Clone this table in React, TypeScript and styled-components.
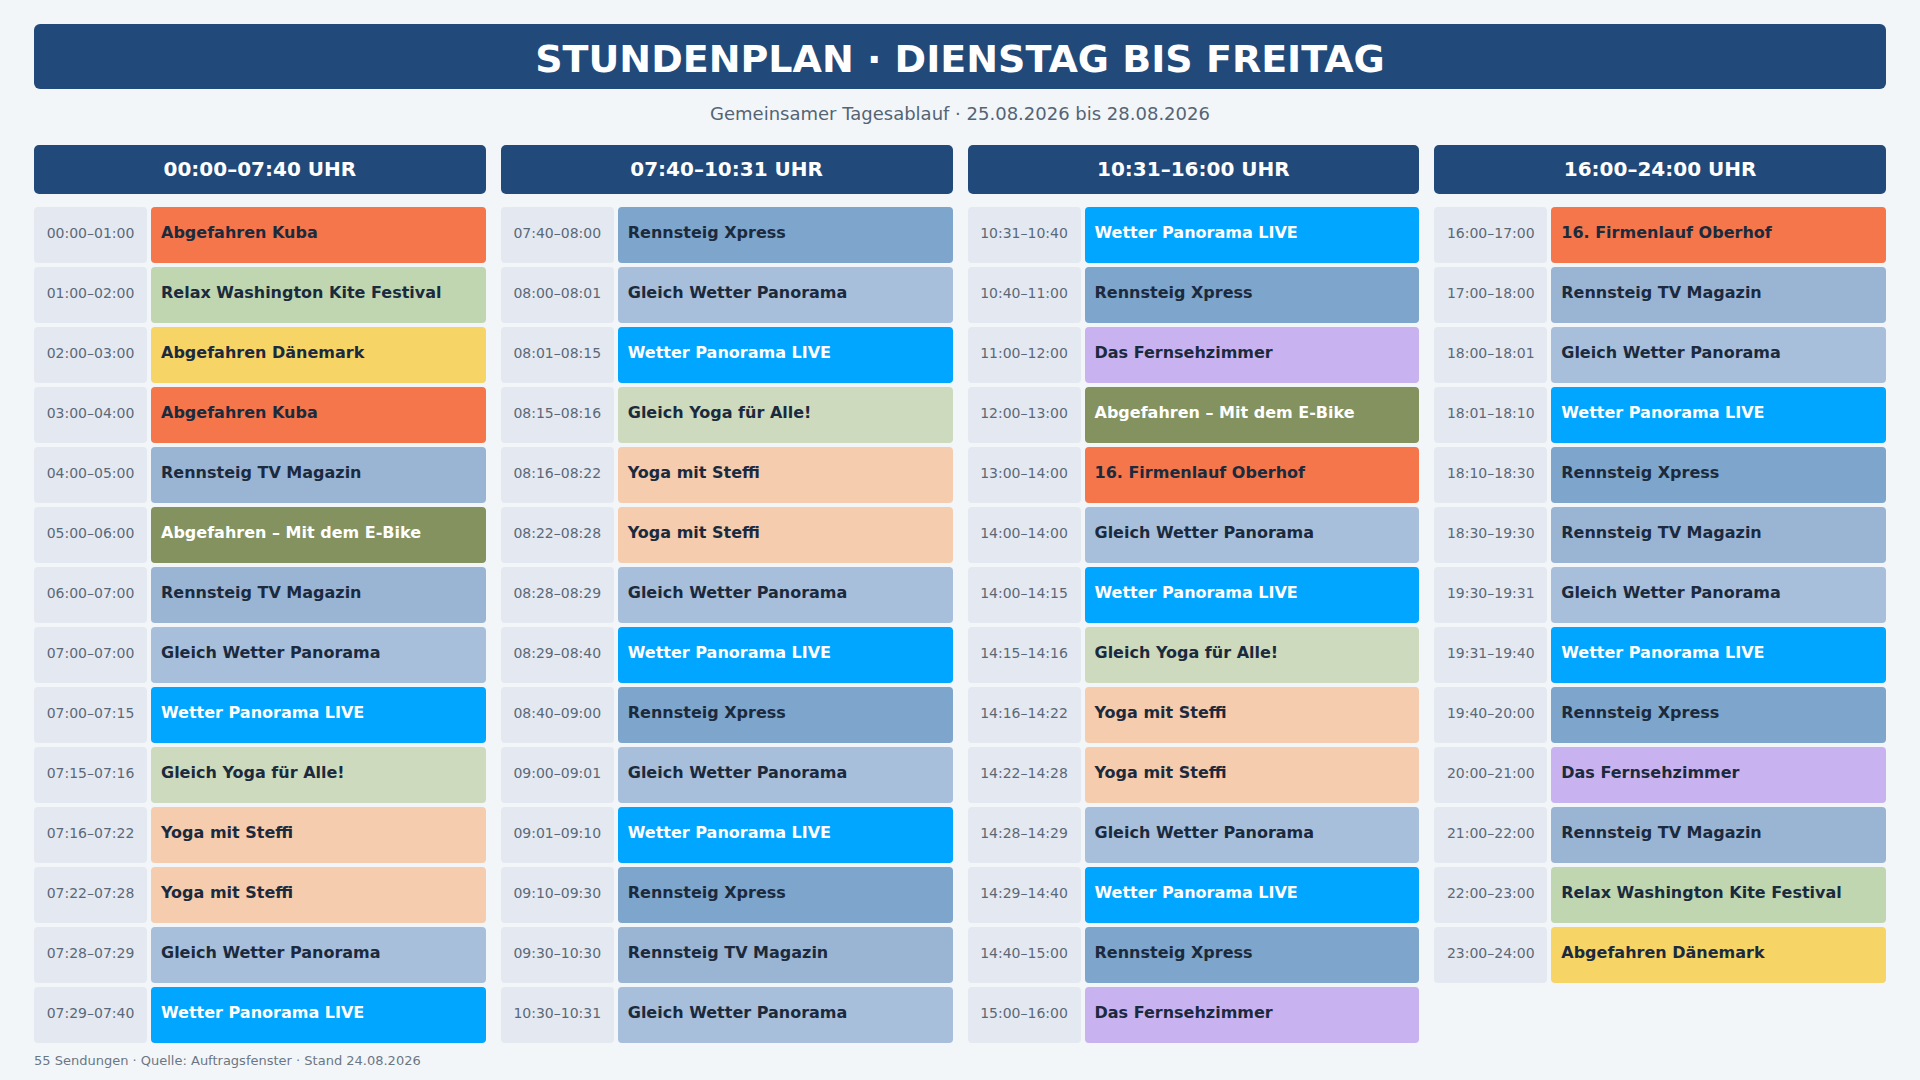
import React from "react";
import styled, { createGlobalStyle } from "styled-components";

const GlobalStyle = createGlobalStyle`
  html, body { margin: 0; padding: 0; background: #f3f6f9; }
  body { font-family: "DejaVu Sans", "Noto Sans", sans-serif; }
  * { box-sizing: border-box; }
`;

type Theme = { bg: string; fg: string };

const THEMES: Record<string, Theme> = {
  "Abgefahren Kuba": { bg: "#f4764a", fg: "#1b2a3d" },
  "16. Firmenlauf Oberhof": { bg: "#f4764a", fg: "#1b2a3d" },
  "Relax Washington Kite Festival": { bg: "#c0d6b0", fg: "#1b2a3d" },
  "Abgefahren Dänemark": { bg: "#f6d566", fg: "#1b2a3d" },
  "Rennsteig TV Magazin": { bg: "#9ab5d3", fg: "#1b2a3d" },
  "Abgefahren – Mit dem E-Bike": { bg: "#83925f", fg: "#ffffff" },
  "Gleich Wetter Panorama": { bg: "#a7bfdb", fg: "#1b2a3d" },
  "Wetter Panorama LIVE": { bg: "#00a6ff", fg: "#ffffff" },
  "Gleich Yoga für Alle!": { bg: "#cddabd", fg: "#1b2a3d" },
  "Yoga mit Steffi": { bg: "#f5ccad", fg: "#1b2a3d" },
  "Rennsteig Xpress": { bg: "#7ea5cb", fg: "#1b2a3d" },
  "Das Fernsehzimmer": { bg: "#c8b3f0", fg: "#1b2a3d" },
};

type Slot = [string, string];
type Column = { title: string; slots: Slot[] };

const COLUMNS: Column[] = [
  {
    title: "00:00–07:40 UHR",
    slots: [
      ["00:00–01:00", "Abgefahren Kuba"],
      ["01:00–02:00", "Relax Washington Kite Festival"],
      ["02:00–03:00", "Abgefahren Dänemark"],
      ["03:00–04:00", "Abgefahren Kuba"],
      ["04:00–05:00", "Rennsteig TV Magazin"],
      ["05:00–06:00", "Abgefahren – Mit dem E-Bike"],
      ["06:00–07:00", "Rennsteig TV Magazin"],
      ["07:00–07:00", "Gleich Wetter Panorama"],
      ["07:00–07:15", "Wetter Panorama LIVE"],
      ["07:15–07:16", "Gleich Yoga für Alle!"],
      ["07:16–07:22", "Yoga mit Steffi"],
      ["07:22–07:28", "Yoga mit Steffi"],
      ["07:28–07:29", "Gleich Wetter Panorama"],
      ["07:29–07:40", "Wetter Panorama LIVE"],
    ],
  },
  {
    title: "07:40–10:31 UHR",
    slots: [
      ["07:40–08:00", "Rennsteig Xpress"],
      ["08:00–08:01", "Gleich Wetter Panorama"],
      ["08:01–08:15", "Wetter Panorama LIVE"],
      ["08:15–08:16", "Gleich Yoga für Alle!"],
      ["08:16–08:22", "Yoga mit Steffi"],
      ["08:22–08:28", "Yoga mit Steffi"],
      ["08:28–08:29", "Gleich Wetter Panorama"],
      ["08:29–08:40", "Wetter Panorama LIVE"],
      ["08:40–09:00", "Rennsteig Xpress"],
      ["09:00–09:01", "Gleich Wetter Panorama"],
      ["09:01–09:10", "Wetter Panorama LIVE"],
      ["09:10–09:30", "Rennsteig Xpress"],
      ["09:30–10:30", "Rennsteig TV Magazin"],
      ["10:30–10:31", "Gleich Wetter Panorama"],
    ],
  },
  {
    title: "10:31–16:00 UHR",
    slots: [
      ["10:31–10:40", "Wetter Panorama LIVE"],
      ["10:40–11:00", "Rennsteig Xpress"],
      ["11:00–12:00", "Das Fernsehzimmer"],
      ["12:00–13:00", "Abgefahren – Mit dem E-Bike"],
      ["13:00–14:00", "16. Firmenlauf Oberhof"],
      ["14:00–14:00", "Gleich Wetter Panorama"],
      ["14:00–14:15", "Wetter Panorama LIVE"],
      ["14:15–14:16", "Gleich Yoga für Alle!"],
      ["14:16–14:22", "Yoga mit Steffi"],
      ["14:22–14:28", "Yoga mit Steffi"],
      ["14:28–14:29", "Gleich Wetter Panorama"],
      ["14:29–14:40", "Wetter Panorama LIVE"],
      ["14:40–15:00", "Rennsteig Xpress"],
      ["15:00–16:00", "Das Fernsehzimmer"],
    ],
  },
  {
    title: "16:00–24:00 UHR",
    slots: [
      ["16:00–17:00", "16. Firmenlauf Oberhof"],
      ["17:00–18:00", "Rennsteig TV Magazin"],
      ["18:00–18:01", "Gleich Wetter Panorama"],
      ["18:01–18:10", "Wetter Panorama LIVE"],
      ["18:10–18:30", "Rennsteig Xpress"],
      ["18:30–19:30", "Rennsteig TV Magazin"],
      ["19:30–19:31", "Gleich Wetter Panorama"],
      ["19:31–19:40", "Wetter Panorama LIVE"],
      ["19:40–20:00", "Rennsteig Xpress"],
      ["20:00–21:00", "Das Fernsehzimmer"],
      ["21:00–22:00", "Rennsteig TV Magazin"],
      ["22:00–23:00", "Relax Washington Kite Festival"],
      ["23:00–24:00", "Abgefahren Dänemark"],
    ],
  },
];

const Page = styled.div`
  width: 1920px;
  height: 1080px;
  padding: 24px 34px 0;
  display: flex;
  flex-direction: column;
`;

const TitleBar = styled.header`
  height: 65px;
  background: #214a7a;
  border-radius: 6px;
  display: flex;
  align-items: center;
  justify-content: center;
  padding-top: 4px;
`;

const Title = styled.h1`
  margin: 0;
  color: #ffffff;
  font-size: 38px;
  font-weight: 700;
  line-height: 1;
  letter-spacing: 0;
`;

const Subtitle = styled.p`
  margin: 14px 0 0;
  height: 42px;
  text-align: center;
  color: #556474;
  font-size: 18px;
  line-height: 21px;
`;

const Grid = styled.div`
  display: grid;
  grid-template-columns: repeat(4, 1fr);
  column-gap: 15px;
  align-items: start;
`;

const Col = styled.section`
  display: flex;
  flex-direction: column;
  gap: 4px;
`;

const ColHead = styled.h2`
  margin: 0 0 9px;
  height: 49px;
  background: #214a7a;
  border-radius: 5px;
  color: #ffffff;
  font-size: 20px;
  font-weight: 700;
  display: flex;
  align-items: center;
  justify-content: center;
  padding-bottom: 1px;
`;

const Row = styled.div`
  display: grid;
  grid-template-columns: 113px 1fr;
  column-gap: 4px;
  height: 56px;
`;

const TimeCell = styled.div`
  background: #e4e9f1;
  border-radius: 4px;
  color: #5b6878;
  font-size: 14px;
  display: flex;
  align-items: center;
  justify-content: center;
  padding-bottom: 4px;
  white-space: nowrap;
`;

const ShowCell = styled.div<{ $bg: string; $fg: string }>`
  background: ${(p) => p.$bg};
  color: ${(p) => p.$fg};
  border-radius: 4px;
  font-size: 16px;
  font-weight: 700;
  display: flex;
  align-items: center;
  padding: 0 10px 5px;
  white-space: nowrap;
  overflow: hidden;
`;

const Footer = styled.footer`
  margin-top: 10px;
  color: #6b7684;
  font-size: 13px;
  line-height: 15px;
`;

export default function App() {
  return (
    <>
      <GlobalStyle />
      <Page>
        <TitleBar>
          <Title>STUNDENPLAN · DIENSTAG BIS FREITAG</Title>
        </TitleBar>
        <Subtitle>Gemeinsamer Tagesablauf · 25.08.2026 bis 28.08.2026</Subtitle>
        <Grid>
          {COLUMNS.map((c) => (
            <Col key={c.title}>
              <ColHead>{c.title}</ColHead>
              {c.slots.map(([time, name], i) => {
                const t = THEMES[name];
                return (
                  <Row key={i}>
                    <TimeCell>{time}</TimeCell>
                    <ShowCell $bg={t.bg} $fg={t.fg}>
                      {name}
                    </ShowCell>
                  </Row>
                );
              })}
            </Col>
          ))}
        </Grid>
        <Footer>55 Sendungen · Quelle: Auftragsfenster · Stand 24.08.2026</Footer>
      </Page>
    </>
  );
}
